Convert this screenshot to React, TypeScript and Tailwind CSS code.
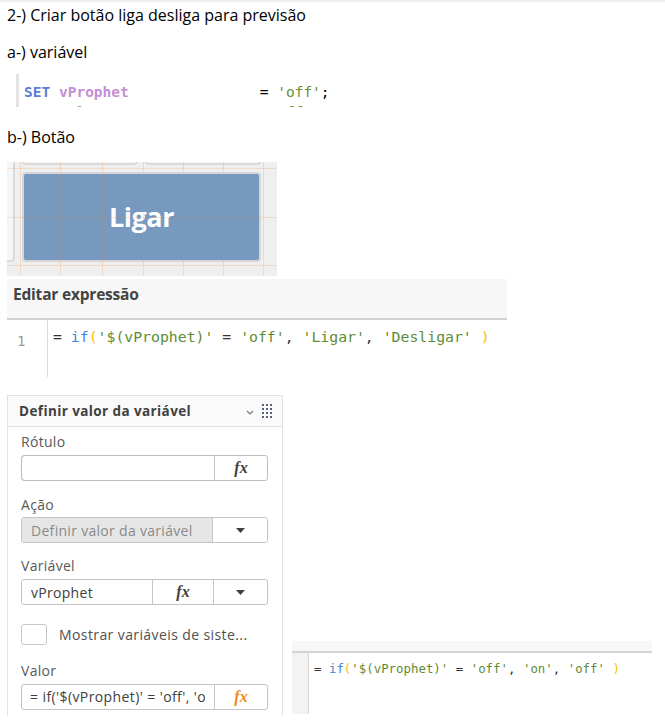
import React from 'react';

const mono = "font-['DejaVu_Sans_Mono',monospace]";

function Caret() {
  return (
    <svg width="9" height="5" viewBox="0 0 9 5">
      <path d="M0 0h9L4.5 5z" fill="#404040" />
    </svg>
  );
}

function Fx({ orange = false }: { orange?: boolean }) {
  return (
    <span
      className={
        "font-['Liberation_Serif',serif] italic font-bold text-[16px] leading-none " +
        (orange ? 'text-[#f08a24]' : 'text-[#404040]')
      }
    >
      fx
    </span>
  );
}

// little code picture under "a-) variável"
function VarSnippet() {
  return (
    <div className="mt-[10px] flex h-[33px] w-[323px] overflow-hidden bg-white">
      <div className="w-[9px]" />
      <div className="w-[3px] bg-[#e3e3e3]" />
      <div className={`${mono} pl-[5px] pt-[8px] text-[14.5px] leading-[20px] whitespace-pre`}>
        <div>
          <span className="font-bold text-[#5b7dd6]">SET</span>{' '}
          <span className="font-bold text-[#c48fd3]">vProphet</span>
          <span className="text-black">{'               = '}</span>
          <span className="text-[#6a8f2f]">'off'</span>
          <span className="text-black">;</span>
        </div>
        <div>
          <span className="text-[#c48fd3]">{'      l'}</span>
          <span className="text-black">{'                     '}</span>
          <span className="text-[#6a8f2f]">'off'</span>
        </div>
      </div>
    </div>
  );
}

// screenshot of the Qlik button on the sheet grid
function ButtonPicture() {
  const vLines = [13, 53, 95, 136, 176, 216, 256];
  const hLines = [6, 55, 103];
  return (
    <div className="relative mt-[13px] h-[114px] w-[270px] overflow-hidden bg-[#efefef]">
      <div className="absolute -top-[20px] left-[15px] h-[23px] w-[116px] rounded-[4px] border-2 border-[#dadada] bg-[#f6f6f6]" />
      <div className="absolute -top-[20px] left-[138px] h-[23px] w-[116px] rounded-[4px] border-2 border-[#dadada] bg-[#f6f6f6]" />
      <div className="absolute -top-[20px] -left-[100px] h-[120px] w-[108px] rounded-[4px] border-2 border-[#dadada] bg-[#f6f6f6]" />
      <div className="absolute left-[15px] top-[10px] flex h-[90px] w-[239px] items-center justify-center rounded-[4px] border-2 border-[#d6d6d6] bg-[#7799c0]">
        <span className="font-['Open_Sans',sans-serif] text-[27px] font-bold tracking-[-0.5px] text-white">Ligar</span>
      </div>
      {vLines.map((x) => (
        <div key={'v' + x} className="absolute top-0 h-full w-px bg-[rgba(240,140,70,0.22)]" style={{ left: x }} />
      ))}
      {hLines.map((y) => (
        <div key={'h' + y} className="absolute left-0 h-px w-full bg-[rgba(240,140,70,0.22)]" style={{ top: y }} />
      ))}
    </div>
  );
}

function Editor() {
  return (
    <div className="mt-[3px] w-[500px]">
      <div className="h-[41px] border-b-2 border-[#d2d2d2] bg-[#f7f7f7] pl-[6px] pt-[3px]">
        <span className="font-['Open_Sans',sans-serif] text-[15.5px] font-bold leading-[20px] tracking-[-0.2px] text-[#444]">
          Editar expressão
        </span>
      </div>
      <div className="flex h-[57px] bg-white">
        <div className="w-[41px] border-r border-[#dcdcdc] pl-[10px] pt-[8px]">
          <span className={`${mono} text-[14px] leading-[18px] text-[#999]`}>1</span>
        </div>
        <div className={`${mono} pl-[5px] pt-[8px] text-[14.8px] leading-[18px] whitespace-pre`}>
          <span className="text-[#333]">= </span>
          <span className="text-[#4a82dc]">if</span>
          <span className="text-[#f5c300]">(</span>
          <span className="text-[#5e8c34]">'$(vProphet)'</span>
          <span className="text-[#333]"> = </span>
          <span className="text-[#5e8c34]">'off'</span>
          <span className="text-[#333]">, </span>
          <span className="text-[#5e8c34]">'Ligar'</span>
          <span className="text-[#333]">, </span>
          <span className="text-[#5e8c34]">'Desligar'</span>
          <span className="text-[#333]"> </span>
          <span className="text-[#f5c300]">)</span>
        </div>
      </div>
    </div>
  );
}

function Label({ children, className = '' }: { children: React.ReactNode; className?: string }) {
  return <div className={`h-[16px] text-[14px] leading-[16px] tracking-[0.3px] text-[#595959] ${className}`}>{children}</div>;
}

function PropertyPanel() {
  return (
    <div className="h-[321px] w-[276px] border-x border-t border-[#e2e2e2] font-['Open_Sans',sans-serif]">
      <div className="flex h-[31px] items-center border-b border-[#e2e2e2] bg-[#fafafa] pl-[11px] pr-[10px]">
        <span className="flex-1 text-[13.5px] font-bold tracking-[0.4px] text-[#404040]">Definir valor da variável</span>
        <svg width="8" height="5" viewBox="0 0 8 5" className="mr-[8px] mt-[2px]">
          <path d="M1 1l3 3 3-3" stroke="#777" strokeWidth="1.2" fill="none" />
        </svg>
        <div className="grid grid-cols-3 gap-[2px]">
          {Array.from({ length: 12 }).map((_, i) => (
            <div key={i} className="h-[2px] w-[2px] bg-[#56607a]" />
          ))}
        </div>
      </div>
      <div className="pl-[13px] pr-[13px]">
        <Label className="mt-[7px]">Rótulo</Label>
        <div className="mt-[5px] flex h-[26px] w-[247px] overflow-hidden rounded-[3px] border border-[#bdbdbd]">
          <div className="-m-px flex-1 rounded-l-[3px] border border-[#8a8a8a]" />
          <div className="flex w-[53px] items-center justify-center border-l border-[#c8c8c8]">
            <Fx />
          </div>
        </div>

        <Label className="mt-[16px]">Ação</Label>
        <div className="mt-[4px] flex h-[26px] w-[247px] overflow-hidden rounded-[3px] border border-[#c4c4c4]">
          <div className="flex flex-1 items-center bg-[#e6e6e6] pl-[9px] text-[14px] tracking-[0.3px] text-[#8a8a8a]">
            Definir valor da variável
          </div>
          <div className="flex w-[55px] items-center justify-center border-l border-[#c8c8c8] bg-white">
            <Caret />
          </div>
        </div>

        <Label className="mt-[15px]">Variável</Label>
        <div className="mt-[5px] flex h-[26px] w-[247px] overflow-hidden rounded-[3px] border border-[#c4c4c4]">
          <div className="flex w-[130px] items-center pl-[9px] text-[14px] tracking-[0.3px] text-[#404040]">vProphet</div>
          <div className="flex w-[61px] items-center justify-center border-l border-[#c8c8c8]">
            <Fx />
          </div>
          <div className="flex flex-1 items-center justify-center border-l border-[#c8c8c8]">
            <Caret />
          </div>
        </div>

        <div className="mt-[19px] flex h-[21px] items-center">
          <div className="h-[21px] w-[26px] rounded-[3px] border border-[#c8c8c8] bg-white" />
          <span className="ml-[12px] text-[14px] tracking-[0.4px] text-[#505050]">Mostrar variáveis de siste...</span>
        </div>

        <Label className="mt-[18px]">Valor</Label>
        <div className="mt-[5px] flex h-[26px] w-[247px] overflow-hidden rounded-[3px] border border-[#c4c4c4]">
          <div className="min-w-0 flex-1 overflow-hidden pl-[8px] pr-[9px]">
            <div className="overflow-hidden whitespace-nowrap text-[14px] leading-[24px] tracking-[0.4px] text-[#404040]">
              = if('$(vProphet)' = 'off', 'on', 'off' )
            </div>
          </div>
          <div className="flex w-[53px] items-center justify-center border-l border-[#c8c8c8]">
            <Fx orange />
          </div>
        </div>
      </div>
    </div>
  );
}

function ValueSnippet() {
  return (
    <div className="ml-[9px] h-[75px] w-[360px] self-end">
      <div className="h-[12px] border-b-2 border-[#d4d4d4] bg-[#f7f7f7]" />
      <div className="flex h-[61px] bg-white">
        <div className="w-[17px] border-r border-[#d8d8d8] bg-[#f3f3f3]" />
        <div className={`${mono} pl-[5px] pt-[8px] text-[12.4px] leading-[16px] whitespace-pre`}>
          <span className="text-[#333]">= </span>
          <span className="text-[#4a82dc]">if</span>
          <span className="text-[#f5c300]">(</span>
          <span className="text-[#5e8c34]">'$(vProphet)'</span>
          <span className="text-[#333]"> = </span>
          <span className="text-[#5e8c34]">'off'</span>
          <span className="text-[#333]">, </span>
          <span className="text-[#5e8c34]">'on'</span>
          <span className="text-[#333]">, </span>
          <span className="text-[#5e8c34]">'off'</span>
          <span className="text-[#333]"> </span>
          <span className="text-[#f5c300]">)</span>
        </div>
      </div>
    </div>
  );
}

export default function App() {
  return (
    <div className="h-[727px] w-[665px] overflow-hidden bg-white font-['Open_Sans',sans-serif] text-black">
      <div className="h-[3px] bg-gradient-to-b from-[#e9e9e9] to-white" />
      <div className="pl-[7px]">
        <p className="h-[24px] text-[16px] leading-[24px]">2-) Criar botão liga desliga para previsão</p>
        <p className="mt-[13px] h-[24px] text-[16px] leading-[24px]">a-) variável</p>
        <VarSnippet />
        <p className="mt-[18px] h-[24px] text-[16px] leading-[24px]">b-) Botão</p>
        <ButtonPicture />
        <Editor />
        <div className="mt-[18px] flex">
          <PropertyPanel />
          <ValueSnippet />
        </div>
      </div>
    </div>
  );
}
